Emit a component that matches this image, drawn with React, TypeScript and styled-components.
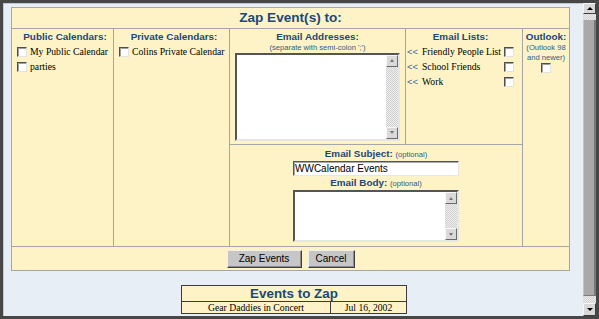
import styled, { createGlobalStyle } from 'styled-components';

const GlobalStyle = createGlobalStyle`
    html, body {
        margin: 0;
        padding: 0;
    }
    body {
        background: #e7eef5;
        font-family: "Liberation Serif", "Times New Roman", serif;
    }
`;

const sans = `"Liberation Sans", Arial, sans-serif`;
const serif = `"Liberation Serif", "Times New Roman", serif`;
const navy = '#1b4878';
const paper = '#fdf3c6';

const Window = styled.div`
    display: flex;
    width: 599px;
    height: 319px;
    box-sizing: border-box;
    border: 3px solid #474747;
    background: #e7eef5;
`;

const Page = styled.div`
    flex: 1;
    display: flex;
    flex-direction: column;
    padding: 4px 13px 0 8px;
    box-shadow: inset 1px 1px 0 #c2c8ce;
`;

const ScrollBar = styled.div`
    display: flex;
    flex-direction: column;
    width: 13px;
    background: repeating-conic-gradient(#d2d2d2 0 25%, #eaeaea 0 50%) 0 0 / 2px 2px;
`;

const ArrowButton = styled.div<{ $h: number }>`
    display: flex;
    align-items: center;
    justify-content: center;
    flex: none;
    height: ${(p) => p.$h}px;
    box-sizing: border-box;
    background: #d8d8d8;
    border: 1px solid;
    border-color: #f6f6f6 #3c3c3c #3c3c3c #f6f6f6;
`;

const Arrow = styled.span<{ $down?: boolean }>`
    width: 0;
    height: 0;
    border-left: 3px solid transparent;
    border-right: 3px solid transparent;
    ${(p) => (p.$down ? 'border-top: 3px solid #000;' : 'border-bottom: 3px solid #000;')}
`;

const Track = styled.div`
    flex: 1;
    display: flex;
    padding: 6px 0 7px;
`;

const Thumb = styled.div`
    flex: 1;
    background: #a9a9a9;
    border-left: 1px solid #c6c6c6;
    border-right: 2px solid #7a7a7a;
    border-bottom: 1px solid #7a7a7a;
`;

const ZapTable = styled.div`
    display: grid;
    grid-template-columns: 101px 115px 175px 116px 46px;
    grid-template-rows: 20px 115px 101px 23px;
    gap: 1px;
    width: max-content;
    border: 1px solid #a6a6a6;
    background: #a6a6a6;
`;

const Cell = styled.div<{ $col: string; $row: string; $pad?: string }>`
    grid-column: ${(p) => p.$col};
    grid-row: ${(p) => p.$row};
    display: flex;
    flex-direction: column;
    align-items: center;
    box-sizing: border-box;
    min-width: 0;
    padding: ${(p) => p.$pad ?? '2px 0 0'};
    background: ${paper};
`;

const Title = styled.div`
    font: bold 13.6px/20px ${sans};
    color: ${navy};
    white-space: nowrap;
`;

const ColumnHeading = styled.div`
    font: bold 9.9px/12px ${sans};
    color: ${navy};
    white-space: nowrap;
    text-align: center;
`;

const Hint = styled.span`
    display: block;
    font: 7.6px/9.5px ${sans};
    color: #2f5c8c;
    text-align: center;
    white-space: nowrap;
`;

const Optional = styled.span`
    font: 7.6px ${sans};
    font-weight: normal;
    color: #2f5c8c;
`;

const CheckRow = styled.label<{ $first?: boolean }>`
    display: flex;
    align-items: center;
    align-self: stretch;
    gap: 3px;
    height: 15px;
    margin-top: ${(p) => (p.$first ? '1px' : '0')};
    font: 9.7px ${serif};
    color: #000;
    white-space: nowrap;
`;

const Check = styled.input.attrs({ type: 'checkbox' })`
    appearance: none;
    flex: none;
    width: 10px;
    height: 10px;
    margin: 0;
    box-sizing: border-box;
    background: #fff;
    border: 1px solid;
    border-color: #4e4e4e #e2e2e2 #e2e2e2 #4e4e4e;
    box-shadow: inset 1px 1px 0 #a0a0a0;
`;

const ListCheck = styled(Check)`
    margin-left: auto;
`;

const OutlookCheck = styled(Check)`
    margin-top: 1px;
`;

const BackArrows = styled.span`
    font: 9.4px ${sans};
    color: #3d66a2;
    margin-right: 1px;
`;

const TextBox = styled.div<{ $w: number; $h: number; $top?: number }>`
    display: flex;
    flex: none;
    width: ${(p) => p.$w}px;
    height: ${(p) => p.$h}px;
    margin-top: ${(p) => p.$top ?? 0}px;
    box-sizing: border-box;
    background: #fff;
    border: 2px solid;
    border-color: #555 #e6e6e6 #e6e6e6 #555;
    textarea {
        flex: 1;
        min-width: 0;
        margin: 0;
        padding: 0 2px;
        border: 0;
        outline: none;
        resize: none;
        overflow: hidden;
        background: transparent;
        font: 10px ${sans};
    }
`;

const Rail = styled.div`
    display: flex;
    flex-direction: column;
    justify-content: space-between;
    width: 12px;
    background: repeating-conic-gradient(#cfcfcf 0 25%, #efefef 0 50%) 0 0 / 2px 2px;
`;

const RailButton = styled(ArrowButton)`
    background: #dadada;
    border-color: #f8f8f8 #6a6a6a #6a6a6a #f8f8f8;
`;

const RailArrow = styled(Arrow)`
    border-left-width: 2.5px;
    border-right-width: 2.5px;
    border-top-color: #777;
    border-bottom-color: #777;
`;

const SubjectInput = styled.input`
    width: 166px;
    height: 15px;
    margin: 1px 0 0;
    padding: 0 1px;
    box-sizing: border-box;
    border: 1px solid;
    border-color: #555 #e6e6e6 #e6e6e6 #555;
    box-shadow: inset 1px 1px 0 #a8a8a8;
    background: #fff;
    font: 10px ${sans};
    color: #000;
    outline: none;
`;

const BodyHeading = styled(ColumnHeading)`
    margin-top: 1px;
`;

const ButtonBar = styled.div`
    grid-column: 1 / -1;
    grid-row: 4;
    display: flex;
    align-items: center;
    justify-content: center;
    gap: 6px;
    background: ${paper};
`;

const FormButton = styled.button<{ $w: number }>`
    width: ${(p) => p.$w}px;
    height: 18px;
    padding: 0;
    box-sizing: border-box;
    background: #c6c6c6;
    border: 1px solid;
    border-color: #efefef #3e3e3e #3e3e3e #efefef;
    box-shadow: inset -1px -1px 0 #8c8c8c;
    font: 10px ${sans};
    color: #000;
`;

const EventsTable = styled.div`
    display: grid;
    grid-template-columns: 148px 75px;
    grid-template-rows: 15px 11px;
    gap: 1px;
    width: max-content;
    margin: 14px 0 0 170px;
    border: 1px solid #3c3c3c;
    background: #3c3c3c;
`;

const EventsHeading = styled.div`
    grid-column: 1 / -1;
    background: ${paper};
    text-align: center;
    font: bold 13.4px/15px ${sans};
    color: ${navy};
`;

const EventCell = styled.div`
    background: ${paper};
    text-align: center;
    font: 9.7px/11px ${serif};
    color: #000;
    white-space: nowrap;
`;

const publicCalendars = ['My Public Calendar', 'parties'];
const privateCalendars = ['Colins Private Calendar'];
const emailLists = ['Friendly People List', 'School Friends', 'Work'];

const ScrollBox = ({ w, h, top }: { w: number; h: number; top?: number }) => (
    <TextBox $w={w} $h={h} $top={top}>
        <textarea />
        <Rail>
            <RailButton $h={12}>
                <RailArrow />
            </RailButton>
            <RailButton $h={12}>
                <RailArrow $down />
            </RailButton>
        </Rail>
    </TextBox>
);

const App = () => {
    return (
        <>
            <GlobalStyle />
            <Window>
                <Page>
                    <ZapTable>
                        <Cell $col="1 / -1" $row="1" $pad="0">
                            <Title>Zap Event(s) to:</Title>
                        </Cell>

                        <Cell $col="1" $row="2 / 4" $pad="2px 0 0 5px">
                            <ColumnHeading>Public Calendars:</ColumnHeading>
                            {publicCalendars.map((name, i) => (
                                <CheckRow key={name} $first={i === 0}>
                                    <Check />
                                    {name}
                                </CheckRow>
                            ))}
                        </Cell>

                        <Cell $col="2" $row="2 / 4" $pad="2px 0 0 5px">
                            <ColumnHeading>Private Calendars:</ColumnHeading>
                            {privateCalendars.map((name, i) => (
                                <CheckRow key={name} $first={i === 0}>
                                    <Check />
                                    {name}
                                </CheckRow>
                            ))}
                        </Cell>

                        <Cell $col="3" $row="2">
                            <ColumnHeading>Email Addresses:</ColumnHeading>
                            <Hint>(separate with semi-colon ';')</Hint>
                            <ScrollBox w={165} h={88} />
                        </Cell>

                        <Cell $col="4" $row="2" $pad="2px 8px 0 1px">
                            <ColumnHeading>Email Lists:</ColumnHeading>
                            {emailLists.map((name, i) => (
                                <CheckRow key={name} $first={i === 0}>
                                    <BackArrows>&lt;&lt;</BackArrows>
                                    {name}
                                    <ListCheck />
                                </CheckRow>
                            ))}
                        </Cell>

                        <Cell $col="5" $row="2 / 4">
                            <ColumnHeading>Outlook:</ColumnHeading>
                            <Hint>
                                (Outlook 98
                                <br />
                                and newer)
                            </Hint>
                            <OutlookCheck />
                        </Cell>

                        <Cell $col="3 / 5" $row="3" $pad="3px 0 0">
                            <ColumnHeading>
                                Email Subject: <Optional>(optional)</Optional>
                            </ColumnHeading>
                            <SubjectInput defaultValue="WWCalendar Events" />
                            <BodyHeading>
                                Email Body: <Optional>(optional)</Optional>
                            </BodyHeading>
                            <ScrollBox w={166} h={52} top={1} />
                        </Cell>

                        <ButtonBar>
                            <FormButton $w={75}>Zap Events</FormButton>
                            <FormButton $w={47}>Cancel</FormButton>
                        </ButtonBar>
                    </ZapTable>

                    <EventsTable>
                        <EventsHeading>Events to Zap</EventsHeading>
                        <EventCell>Gear Daddies in Concert</EventCell>
                        <EventCell>Jul 16, 2002</EventCell>
                    </EventsTable>
                </Page>

                <ScrollBar>
                    <ArrowButton $h={11}>
                        <Arrow />
                    </ArrowButton>
                    <Track>
                        <Thumb />
                    </Track>
                    <ArrowButton $h={13}>
                        <Arrow $down />
                    </ArrowButton>
                </ScrollBar>
            </Window>
        </>
    );
};

export default App;
